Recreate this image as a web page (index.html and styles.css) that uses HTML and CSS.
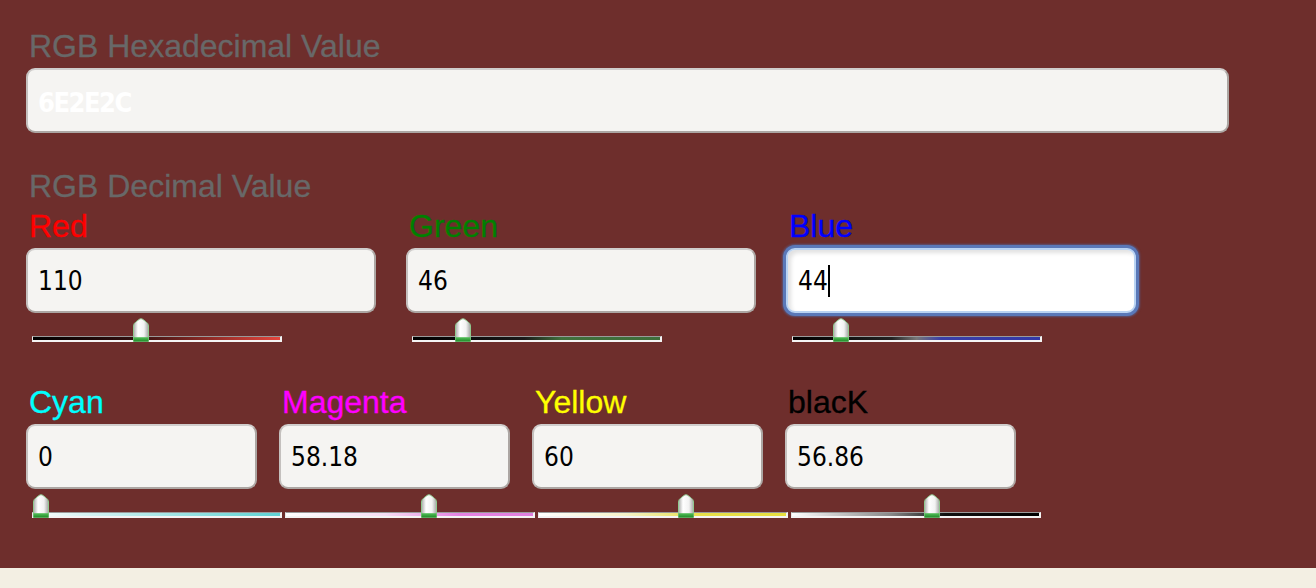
FILE: index.html
```html
<!DOCTYPE html>
<html>
<head>
<meta charset="utf-8">
<link rel="stylesheet" href="styles.css">
</head>
<body>
<svg class="defs" width="0" height="0" aria-hidden="true">
  <defs>
    <linearGradient id="tb" x1="0" x2="1" y1="0" y2="0">
      <stop offset="0" stop-color="#a9aba9"/>
      <stop offset="0.3" stop-color="#ffffff"/>
      <stop offset="0.7" stop-color="#f2f2f2"/>
      <stop offset="1" stop-color="#a3a5a3"/>
    </linearGradient>
    <linearGradient id="tg" x1="0" x2="0" y1="0" y2="1">
      <stop offset="0" stop-color="#55c05a"/>
      <stop offset="1" stop-color="#1f8a28"/>
    </linearGradient>
    <symbol id="thumb" viewBox="0 0 18 24">
      <path d="M1.5 8 Q1.5 5.5 4 3.8 L7.4 1.2 Q9 0.2 10.6 1.2 L14 3.8 Q16.5 5.5 16.5 8 V23.5 H1.5 Z" fill="url(#tb)" stroke="#8fc98f" stroke-width="1"/>
      <rect x="1.5" y="19.2" width="15" height="4.3" fill="url(#tg)"/>
    </symbol>
  </defs>
</svg>
<div class="panel">
  <div class="label gray">RGB Hexadecimal Value</div>
  <div class="field hex">6E2E2C</div>

  <div class="label gray section">RGB Decimal Value</div>
  <div class="row rgb">
    <div class="col">
      <div class="label c-red">Red</div>
      <div class="field">110</div>
      <div class="slider">
        <div class="track t-red"></div>
        <svg class="thumb" style="left:100px" width="18" height="24"><use href="#thumb"/></svg>
      </div>
    </div>
    <div class="col">
      <div class="label c-green">Green</div>
      <div class="field">46</div>
      <div class="slider">
        <div class="track t-green"></div>
        <svg class="thumb" style="left:42px" width="18" height="24"><use href="#thumb"/></svg>
      </div>
    </div>
    <div class="col">
      <div class="label c-blue">Blue</div>
      <div class="field focus">44<span class="caret"></span></div>
      <div class="slider">
        <div class="track t-blue"></div>
        <svg class="thumb" style="left:40px" width="18" height="24"><use href="#thumb"/></svg>
      </div>
    </div>
  </div>

  <div class="row cmyk">
    <div class="col">
      <div class="label c-cyan">Cyan</div>
      <div class="field">0</div>
      <div class="slider">
        <div class="track t-cyan"></div>
        <svg class="thumb" style="left:0px" width="18" height="24"><use href="#thumb"/></svg>
      </div>
    </div>
    <div class="col">
      <div class="label c-magenta">Magenta</div>
      <div class="field">58.18</div>
      <div class="slider">
        <div class="track t-magenta"></div>
        <svg class="thumb" style="left:135px" width="18" height="24"><use href="#thumb"/></svg>
      </div>
    </div>
    <div class="col">
      <div class="label c-yellow">Yellow</div>
      <div class="field">60</div>
      <div class="slider">
        <div class="track t-yellow"></div>
        <svg class="thumb" style="left:139px" width="18" height="24"><use href="#thumb"/></svg>
      </div>
    </div>
    <div class="col">
      <div class="label c-black">blacK</div>
      <div class="field">56.86</div>
      <div class="slider">
        <div class="track t-black"></div>
        <svg class="thumb" style="left:132px" width="18" height="24"><use href="#thumb"/></svg>
      </div>
    </div>
  </div>
</div>
</body>
</html>
```
FILE: styles.css
```css
html, body {
  margin: 0;
  padding: 0;
  background: #f3efe3;
}
.defs {
  position: absolute;
  width: 0;
  height: 0;
  overflow: hidden;
}
.panel {
  box-sizing: border-box;
  height: 568px;
  background: #6e2e2c;
  padding: 28px 0 0 26px;
  font-family: "Liberation Sans", Arial, sans-serif;
}
.label {
  font-size: 32px;
  line-height: 36px;
  height: 36px;
  padding-left: 3px;
  margin-bottom: 4px;
  white-space: nowrap;
  -webkit-text-stroke: 0.3px currentColor;
}
.gray { color: #686868; }
.section { margin-top: 35px; }
.c-red { color: #ff0000; }
.c-green { color: #008000; }
.c-blue { color: #0000ff; }
.c-cyan { color: #00ffff; }
.c-magenta { color: #ff00ff; }
.c-yellow { color: #ffff00; }
.c-black { color: #000000; }

.field {
  box-sizing: border-box;
  height: 65px;
  background: #f5f4f2;
  border: 2px solid #aca6a3;
  border-top-color: #cfcdcc;
  border-left-color: #c4c0be;
  border-radius: 9px;
  padding-left: 10px;
  display: flex;
  align-items: center;
  font-family: "DejaVu Sans Condensed", "DejaVu Sans", sans-serif;
  font-stretch: condensed;
  font-size: 26px;
  color: #000;
}
.field.hex {
  width: 1203px;
  font-weight: bold;
  color: #ffffff;
  font-size: 27px;
  letter-spacing: -1.5px;
  padding-top: 3px;
}
.field.focus {
  background: #ffffff;
  border: 2px solid #b9d3f3;
  box-shadow: 0 0 0 3px #5a78b8, 0 0 2px 4px rgba(80, 110, 170, 0.6), inset 3px 3px 4px rgba(0,0,0,0.12);
}
.caret {
  display: inline-block;
  width: 2px;
  height: 32px;
  background: #000;
  margin-left: 0;
}
.row {
  display: flex;
}
.rgb { gap: 30px; }
.rgb .col { width: 350px; }
.cmyk {
  gap: 22px;
  margin-top: 42px;
}
.cmyk .col { width: 231px; }

.slider {
  position: relative;
  width: 250px;
  height: 24px;
  margin-top: 5px;
  margin-left: 6px;
  display: flex;
  align-items: flex-end;
}
.track {
  box-sizing: border-box;
  width: 250px;
  height: 6px;
  border-top: 1px solid #9a9a9a;
  border-bottom: 2px solid #f4f4f4;
  border-left: 1px solid #e8e8e8;
  border-right: 2px solid #f4f4f4;
}
.t-red { background: linear-gradient(to right, #000 0%, #301010 40%, #e4453c 100%); }
.t-green { background: linear-gradient(to right, #000 0%, #1a1a1a 45%, #40703c 60%, #3e6e3a 100%); }
.t-blue { background: linear-gradient(to right, #000 0%, #222 40%, #777 50%, #3a3fa8 60%, #3338a8 100%); }
.t-cyan { background: linear-gradient(to right, #ffffff 0%, #d8f4f4 20%, #5ed2d4 100%); }
.t-magenta { background: linear-gradient(to right, #ffffff 0%, #f6ddf4 40%, #e583e2 70%, #e080de 100%); }
.t-yellow { background: linear-gradient(to right, #ffffff 0%, #f6f2c8 35%, #e8e04a 65%, #e8e040 100%); }
.t-black { background: linear-gradient(to right, #ffffff 0%, #888 40%, #111 62%, #000 100%); }
.thumb {
  position: absolute;
  bottom: 0;
  display: block;
}
```
